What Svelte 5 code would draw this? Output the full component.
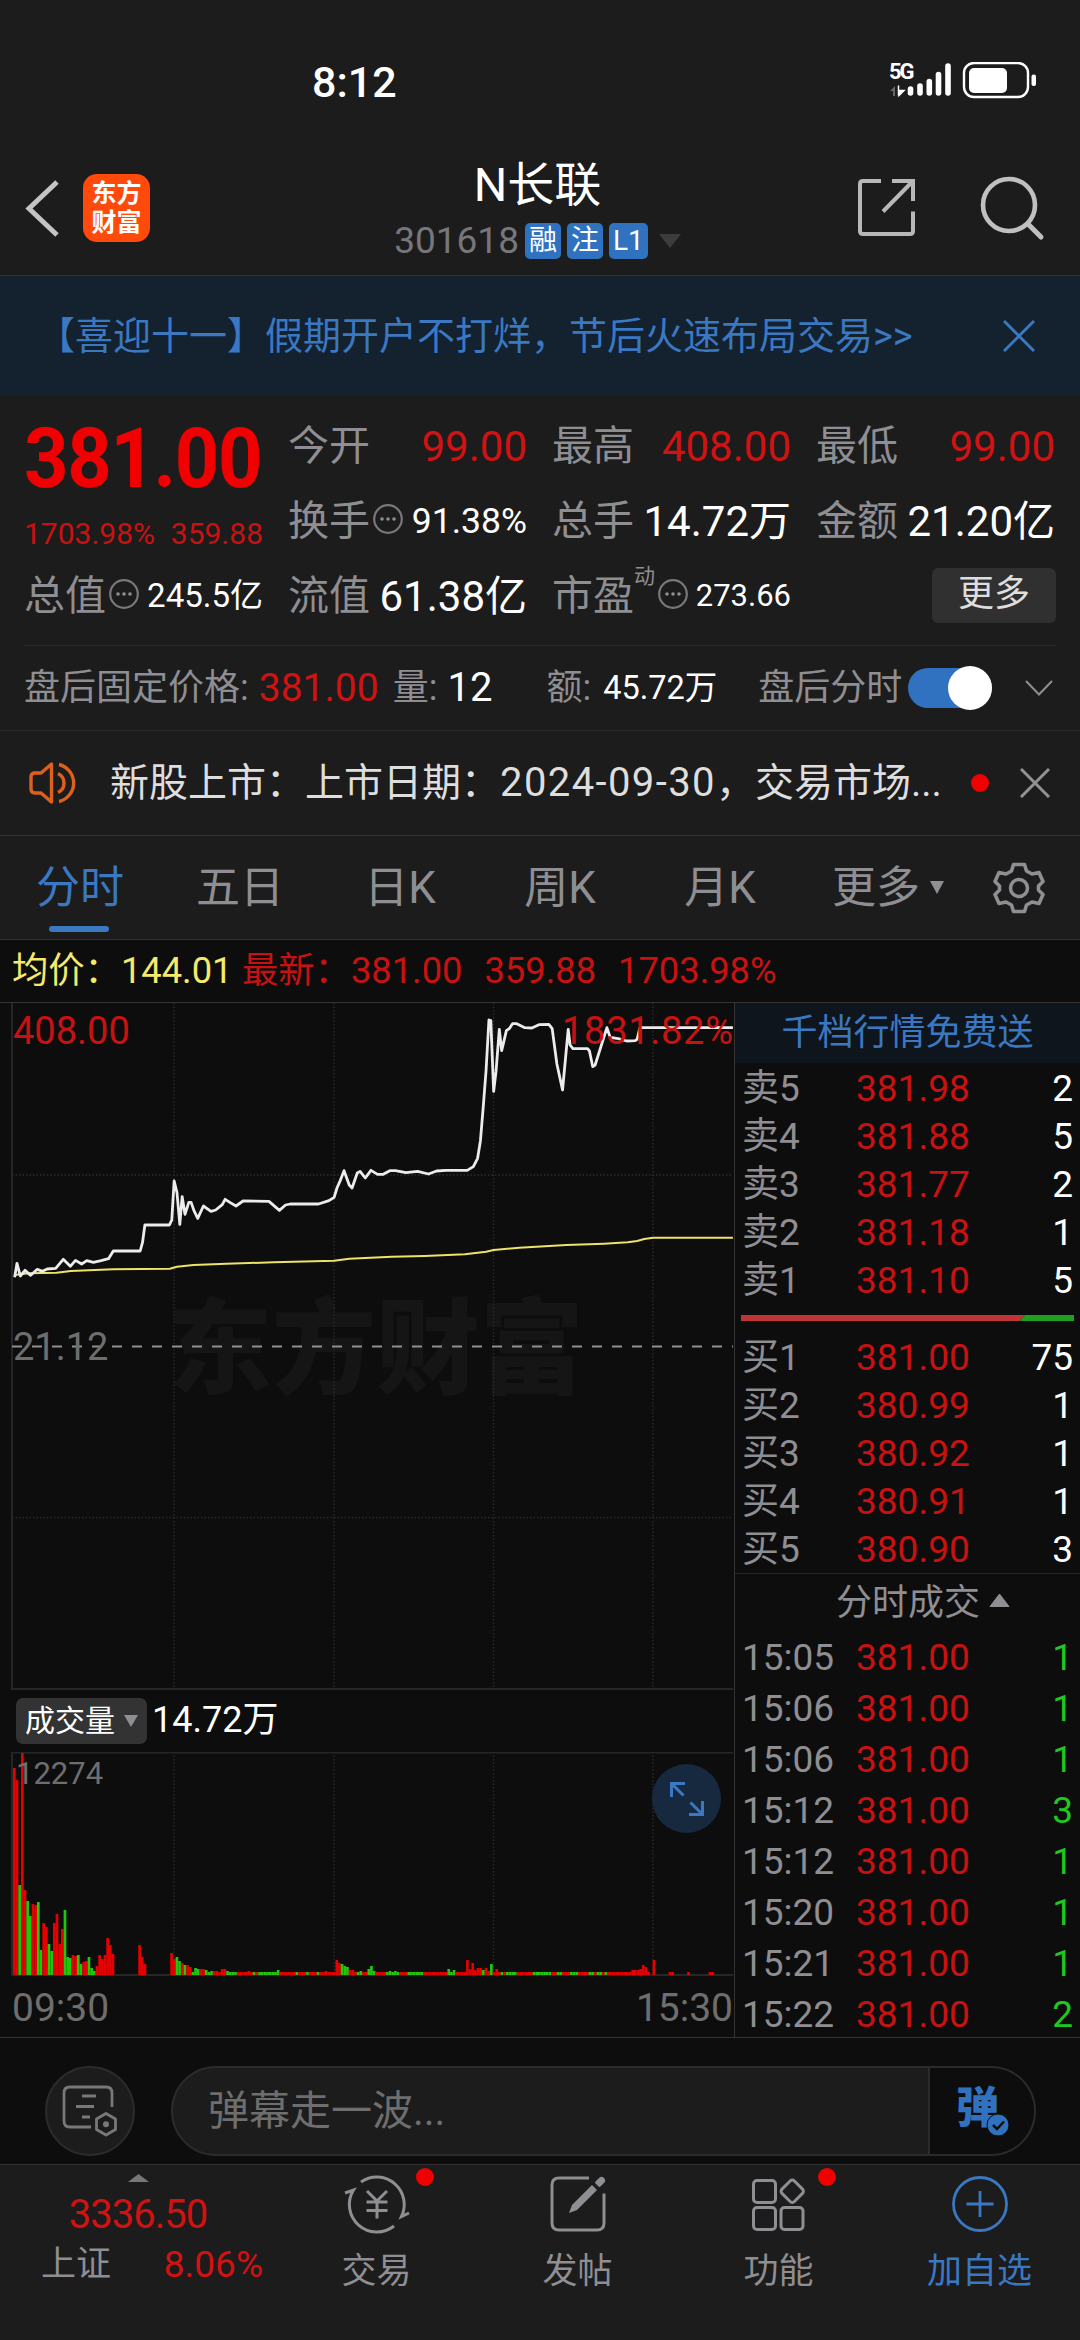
<script lang="ts">
  const badges = ['融', '注', 'L1']

  const tabs = ['五日', '日K', '周K', '月K']

  const asks = [
    { label: '卖5', price: '381.98', volume: 2 },
    { label: '卖4', price: '381.88', volume: 5 },
    { label: '卖3', price: '381.77', volume: 2 },
    { label: '卖2', price: '381.18', volume: 1 },
    { label: '卖1', price: '381.10', volume: 5 },
  ]

  const bids = [
    { label: '买1', price: '381.00', volume: 75 },
    { label: '买2', price: '380.99', volume: 1 },
    { label: '买3', price: '380.92', volume: 1 },
    { label: '买4', price: '380.91', volume: 1 },
    { label: '买5', price: '380.90', volume: 3 },
  ]

  const trades = [
    { time: '15:05', price: '381.00', volume: 1 },
    { time: '15:06', price: '381.00', volume: 1 },
    { time: '15:06', price: '381.00', volume: 1 },
    { time: '15:12', price: '381.00', volume: 3 },
    { time: '15:12', price: '381.00', volume: 1 },
    { time: '15:20', price: '381.00', volume: 1 },
    { time: '15:21', price: '381.00', volume: 1 },
    { time: '15:22', price: '381.00', volume: 2 },
  ]

  const priceLine =
    '31,862 36,820 43,858 53,841 65,856 79,838 90,844 100,837 118,835 134,808 149,829 160,811 173,822 184,812 198,817 214,812 230,806 240,783 297,783 302,757 307,705 359,705 364,690 369,573 375,608 381,703 386,620 392,673 400,637 405,637 411,662 419,685 431,648 447,664 457,660 471,644 477,628 488,638 500,648 515,633 570,634 592,661 605,645 615,642 675,642 697,632 708,622 714,594 720,575 729,542 740,585 746,594 757,549 763,544 774,564 786,541 800,553 812,553 826,542 838,542 860,548 885,544 908,552 925,543 945,541 990,541 1003,530 1012,505 1018,452 1024,350 1030,240 1036,90 1040,92 1046,304 1051,245 1058,118 1063,182 1073,122 1079,116 1086,101 1095,101 1112,113 1127,114 1142,104 1163,103 1170,116 1180,222 1192,300 1204,118 1208,165 1214,176 1245,176 1249,183 1256,230 1261,225 1286,113 1293,142 1310,146 1328,153 1346,152 1350,148 1356,113 1553,113'
  const averageLine =
    '31,855 60,850 120,848 150,843 240,838 360,836 375,830 410,825 480,821 580,817 708,812 740,806 830,800 900,798 985,793 1030,785 1046,780 1100,773 1200,765 1280,761 1330,757 1350,753 1365,747 1384,743 1553,743'

  const gridX = [174, 334, 493.5, 653]

  // colour of each minute followed by how many minutes it lasts
  const runs =
    'r2 g1 r2 g2 r2 g2 r2 g2 r4 g3 r2 g2 r2 g3 r30 g2 r1 g1 r2 g3 r2 g3 r5 g4 r6 g1 r1 g8 r6 g1 r3 g1 r3 g1 r8 g3 r3 g2 r2 g3 r4 g5 r3 g6 r9 g3 r10 g1 r2 g1 r3 g1 r1 g4 r6 g7 r2 g2 r3 g3 r4 g2 r1 g2 r1 g1 r40'
  const colors = runs.split(' ').flatMap((run) => Array(Number(run.slice(1))).fill(run[0]))

  const opening = [
    207, 195, 90, 222, 85, 74, 59, 71, 70, 73, 25, 52, 48, 31, 24, 52, 61, 31, 46, 65, 18, 17, 20, 19, 20, 11, 13, 14,
    18, 7, 4, 9, 20, 16, 20, 37, 30, 21, 0, 0, 0, 0, 0, 0, 0, 0, 0, 30, 18, 11, 0, 0, 0, 0, 0, 0, 0, 0, 0, 22, 16, 18,
    14, 12, 10, 10, 8, 3, 7, 6, 6, 6, 5, 3, 4, 4, 4, 3, 6, 6, 4,
  ]
  const spikes: Record<number, number> = {
    88: 4, 99: 5, 117: 4, 121: 15, 122: 12, 123: 11, 124: 9, 125: 8, 126: 5, 127: 5, 130: 4, 133: 6, 134: 9,
    135: 4, 141: 4, 143: 4, 163: 6, 165: 5, 170: 15, 171: 6, 172: 12, 173: 5, 174: 7, 175: 7, 176: 5, 177: 7,
    178: 4, 179: 11, 181: 6, 232: 5, 233: 5, 234: 5, 235: 6, 236: 10, 237: 8, 238: 3, 240: 15, 246: 3, 247: 3,
    253: 3, 261: 3, 262: 3, 263: 3,
  }

  const bars = colors
    .map((color, i) => ({ color, x: 13 + i * 2.665, height: opening[i] ?? spikes[i] ?? (i < 239 ? 3 : 0) }))
    .filter((bar) => bar.height > 0 && bar.x < 733)
</script>

{#snippet info()}
  <svg class="info" width="30" height="30" viewBox="0 0 30 30">
    <circle cx="15" cy="15" r="13.8" fill="none" stroke="#78787c" stroke-width="2.2" />
    <circle cx="9" cy="15" r="1.8" fill="#8e8e93" />
    <circle cx="15" cy="15" r="1.8" fill="#8e8e93" />
    <circle cx="21" cy="15" r="1.8" fill="#8e8e93" />
  </svg>
{/snippet}

<div class="page">
  <header class="top">
    <div class="status">
      <span class="clock">8:12</span>
      <div class="signals">
        <span class="net">5G</span>
        <svg width="150" height="40" viewBox="0 0 150 40">
          <path d="M6 34V24L1 29H4V34z" fill="#666" />
          <path d="M9.500 23.500V33.500M10 33.500l5-5h-5z" stroke="#fff" stroke-width="1.5" fill="#fff" />
          <path d="M21.5 27v4M31 24v7M40.3 19.5v11.5M49.5 12.5v18.500M59 4v27" stroke="#fff" stroke-width="5.6" stroke-linecap="round" />
          <rect x="75" y="1" width="64" height="34" rx="10" fill="none" stroke="#fff" stroke-width="2.4" />
          <rect x="80" y="6" width="38" height="25" rx="5" fill="#fff" />
          <rect x="142.5" y="12.5" width="4.5" height="11.5" rx="2" fill="#fff" />
        </svg>
      </div>
    </div>
    <div class="navbar">
      <svg class="back" width="40" height="60" viewBox="0 0 40 60">
        <path d="M32 4L4 30.5L32 57" fill="none" stroke="#c4c4c4" stroke-width="5" />
      </svg>
      <div class="logo"><span>东方</span><span>财富</span></div>
      <div class="title">
        <h1>N长联</h1>
        <div class="code">
          <span>301618</span>
          {#each badges as badge}
            <b>{badge}</b>
          {/each}
          <svg class="caret" width="22" height="14" viewBox="0 0 22 14"><path d="M0 0h22L11 14z" fill="#3c3c3c" /></svg>
        </div>
      </div>
      <svg class="share" width="62" height="62" viewBox="0 0 62 62">
        <g fill="none" stroke="#b8b8b8" stroke-width="4">
          <path d="M25 4H7Q4 4 4 7V54Q4 57 7 57H54Q57 57 57 54V34.5" />
          <path d="M36 4H57V24M56 5L27 34.5" />
        </g>
      </svg>
      <svg class="search" width="66" height="66" viewBox="0 0 66 66">
        <g fill="none" stroke="#c0c0c0" stroke-linecap="round">
          <circle cx="30" cy="30" r="26" stroke-width="4.6" />
          <path d="M50 50L62 62" stroke-width="5" />
        </g>
      </svg>
    </div>
  </header>

  <div class="promo">
    <span>【喜迎十一】假期开户不打烊，节后火速布局交易&gt;&gt;</span>
    <svg width="32" height="32" viewBox="0 0 32 32"><path d="M1 1L31 31M31 1L1 31" stroke="#3a78c2" stroke-width="3" /></svg>
  </div>

  <section class="quote">
    <div class="last">
      <strong>381.00</strong>
      <div class="change"><span>1703.98%</span><span>359.88</span></div>
    </div>
    <div class="cell"><label>今开</label><span class="up">99.00</span></div>
    <div class="cell"><label>最高</label><span class="up">408.00</span></div>
    <div class="cell"><label>最低</label><span class="up">99.00</span></div>
    <div class="cell"><label>换手{@render info()}</label><span class="mid">91.38%</span></div>
    <div class="cell"><label>总手</label><span>14.72万</span></div>
    <div class="cell"><label>金额</label><span>21.20亿</span></div>
    <div class="cell"><label>总值{@render info()}</label><span class="small">245.5亿</span></div>
    <div class="cell"><label>流值</label><span>61.38亿</span></div>
    <div class="cell"><label>市盈<sup>动</sup>{@render info()}</label><span class="tiny">273.66</span></div>
    <div class="cell"><button class="more">更多</button></div>
  </section>

  <div class="after">
    <label>盘后固定价格:</label>
    <span class="up fixed">381.00</span>
    <label>量:</label>
    <span class="lots">12</span>
    <label>额:</label>
    <span class="amount">45.72万</span>
    <label>盘后分时</label>
    <i class="toggle"></i>
    <svg width="28" height="16" viewBox="0 0 28 16"><path d="M1 1L14 14.5L27 1" fill="none" stroke="#8e8e93" stroke-width="2" /></svg>
  </div>

  <div class="news">
    <svg width="52" height="44" viewBox="0 0 52 44">
      <g fill="none" stroke="#dd601c" stroke-width="3.4">
        <path d="M22.5 3V41L12 32H6Q2 32 2 28V16Q2 12 6 12H12Z" stroke-linejoin="round" />
        <path d="M29 12.5A10.5 10.5 0 0 1 29 31.5M30 3.5A19 19 0 0 1 30 40.5" />
      </g>
    </svg>
    <p>新股上市：上市日期：<span>2024-09-30</span>，交易市场...</p>
    <i></i>
    <svg width="30" height="30" viewBox="0 0 30 30"><path d="M1 1L29 29M29 1L1 29" stroke="#929296" stroke-width="3" /></svg>
  </div>

  <nav class="tabs">
    <span class="tab active">分时</span>
    {#each tabs as tab}
      <span class="tab">{tab}</span>
    {/each}
    <span class="expand">更多<svg width="14" height="13" viewBox="0 0 14 13"><path d="M0 0h14L7 13z" fill="#8e8e93" /></svg></span>
    <svg class="gear" width="52" height="52" viewBox="0 0 52 52">
      <g fill="none" stroke="#8e8e93" stroke-width="3.6" stroke-linejoin="round">
        <path d="M20.5 2.5H31.5L33.5 9L39 12L46 10.5L50 19.5L45.500 24V28L50 32.5L46 41.5L39 40L33.5 43L31.5 49.5H20.5L18.5 43L13 40L6 41.5L2 32.5L6.5 28V24L2 19.5L6 10.5L13 12L18.5 9Z" />
        <circle cx="26" cy="26" r="8.5" />
      </g>
    </svg>
  </nav>

  <div class="legend">
    <span class="avg">均价：<b>144.01</b></span>
    <span class="now">最新：<b>381.00</b><b>359.88</b><b>1703.98%</b></span>
  </div>

  <main class="board">
    <div class="charts">
      <svg class="minute" width="734" height="687" viewBox="0 0 734 687">
        <text x="168" y="383" class="watermark">东方财富</text>
        <g stroke="#2b2b2b" stroke-width="1.4" stroke-dasharray="1.5 2">
          {#each gridX as x}
            <path d="M{x} 0V686" />
          {/each}
          <path d="M12 172H733M12 514.5H733" />
        </g>
        <path d="M12 0V686H733" fill="none" stroke="#262626" stroke-width="2" />
        <path d="M12 343.5H733" stroke="#909090" stroke-width="2" stroke-dasharray="10 10" />
        <g transform="translate(0 -13) scale(.47194 .33333)" fill="none" stroke-linejoin="round">
          <polyline points={averageLine} stroke="#ece36a" stroke-width="2" vector-effect="non-scaling-stroke" />
          <polyline points={priceLine} stroke="#ececec" stroke-width="2.8" vector-effect="non-scaling-stroke" />
        </g>
        <text x="13" y="41" class="high">408.00</text>
        <text x="733" y="41" class="high" text-anchor="end" textLength="171">1831.82%</text>
        <text x="13" y="357" class="close">21.12</text>
      </svg>

      <div class="indicator">
        <button>成交量<svg width="14" height="12" viewBox="0 0 14 12"><path d="M0 0h14L7 12z" fill="#8e8e93" /></svg></button>
        <span>14.72万</span>
      </div>

      <div class="volume">
        <svg width="734" height="226" viewBox="0 0 734 226">
          <g stroke="#2b2b2b" stroke-width="1.4" stroke-dasharray="1.5 2">
            {#each gridX as x}
              <path d="M{x} 0V222" />
            {/each}
          </g>
          <path d="M733 .5H12V223H733" fill="none" stroke="#262626" stroke-width="2" />
          {#each bars as bar}
            <rect
              x={bar.x}
              y={223 - bar.height}
              width="2.7"
              height={bar.height}
              fill={bar.color === 'r' ? '#e60000' : '#1fc80a'}
            />
          {/each}
          <text x="16" y="32" class="peak">12274</text>
        </svg>
        <button class="zoom" aria-label="全屏">
          <svg width="36" height="36" viewBox="0 0 36 36">
            <path d="M16 2.5H2.5V16M3 3L14.5 14.5M20 33.5H33.5V20M33 33L21.5 21.5" fill="none" stroke="#3a78c2" stroke-width="3" />
          </svg>
        </button>
      </div>

      <div class="times"><span>09:30</span><span>15:30</span></div>
    </div>

    <aside class="book">
      <div class="levels-ad">千档行情免费送</div>
      <div class="levels">
        {#each asks as row}
          <div class="row"><em>{row.label}</em><span>{row.price}</span><b>{row.volume}</b></div>
        {/each}
      </div>
      <svg class="ratio" width="333" height="6" viewBox="0 0 333 6">
        <path d="M0 0H284L279 6H0z" fill="#bf3434" />
        <path d="M284 0H333V6H279z" fill="#1f9f1f" />
      </svg>
      <div class="levels bids">
        {#each bids as row}
          <div class="row"><em>{row.label}</em><span>{row.price}</span><b>{row.volume}</b></div>
        {/each}
      </div>
      <div class="trades-title">
        分时成交<svg width="21" height="15" viewBox="0 0 21 15"><path d="M10.5 1L20 13.5H1z" fill="#8e8e93" stroke="#8e8e93" stroke-linejoin="round" /></svg>
      </div>
      <div class="trades">
        {#each trades as row}
          <div class="row"><em>{row.time}</em><span>{row.price}</span><b>{row.volume}</b></div>
        {/each}
      </div>
    </aside>
  </main>

  <div class="danmu">
    <div class="round">
      <svg width="56" height="52" viewBox="0 0 56 52">
        <g fill="none" stroke="#78787a" stroke-width="2.8">
          <path d="M29 42H8Q2 42 2 36V8Q2 2 8 2H44Q50 2 50 8V22" />
          <path d="M20 11H34M14 21.5H32M20 32H28" />
          <path d="M44 28.5L53.5 34V44.500L44 50L34.5 44.500V34Z" stroke-linejoin="round" />
        </g>
        <circle cx="44" cy="39.3" r="3" fill="#78787a" />
      </svg>
    </div>
    <div class="input">
      <span>弹幕走一波...</span>
      <div class="send">
        弹
        <svg width="24" height="24" viewBox="0 0 24 24">
          <circle cx="12" cy="12" r="11" fill="#3072c0" stroke="#0d0d0d" />
          <path d="M7 12l4 4l7-7.500" fill="none" stroke="#0d0d0d" stroke-width="2.5" />
        </svg>
      </div>
    </div>
  </div>

  <footer class="bottom">
    <div class="index">
      <svg width="21" height="8" viewBox="0 0 21 8"><path d="M10.5 0L21 8H0z" fill="#77777a" /></svg>
      <strong>3336.50</strong>
      <div><span>上证</span><b>8.06%</b></div>
    </div>
    <div class="item">
      <svg width="66" height="60" viewBox="0 0 66 60">
        <g fill="none" stroke="#8e8e93" stroke-width="3">
          <path d="M17 8A27.5 27.5 0 0 1 57.5 42.5L65 39" />
          <path d="M50 52A27.5 27.5 0 0 1 9.5 16L1 19" />
          <path d="M23 17L33 27L43 17M33 27V44.5M22.5 28H43.5M22.5 36.5H43.5" />
        </g>
      </svg>
      <span>交易</span>
      <i></i>
    </div>
    <div class="item">
      <svg width="66" height="60" viewBox="0 0 66 60">
        <path d="M44 4H14Q7 4 7 11V49Q7 56 14 56H52Q59 56 59 49V19.5" fill="none" stroke="#8e8e93" stroke-width="3" />
        <path d="M24 39L27 31L47 11L52 16L32 36Z" fill="#8e8e93" />
        <path d="M53.500 9.500L56.500 6.500" stroke="#8e8e93" stroke-width="7" stroke-linecap="round" />
        <path d="M48 8L55 15" stroke="#1c1c1c" stroke-width="1.600" />
      </svg>
      <span>发帖</span>
    </div>
    <div class="item">
      <svg width="66" height="60" viewBox="0 0 66 60">
        <g fill="none" stroke="#8e8e93" stroke-width="3">
          <rect x="7.5" y="6.5" width="22" height="22" rx="3.5" />
          <rect x="7.5" y="33.5" width="22" height="22" rx="3.5" />
          <rect x="35" y="33.5" width="22" height="22" rx="3.5" />
          <rect x="37.5" y="8.5" width="17.500" height="17.500" rx="3" transform="rotate(45 46.250 17.250)" />
        </g>
      </svg>
      <span>功能</span>
      <i></i>
    </div>
    <div class="item add">
      <svg width="66" height="60" viewBox="0 0 66 60">
        <g fill="none" stroke="#3a78c2" stroke-width="2.8">
          <circle cx="33" cy="30" r="26.5" />
          <path d="M33 17V43M19.5 30H46.5" />
        </g>
      </svg>
      <span>加自选</span>
    </div>
  </footer>
</div>

<style>
  :global(body) {
    background: #0d0d0d;
  }

  .page {
    display: flex;
    flex-direction: column;
    width: 1080px;
    height: 2340px;
    overflow: hidden;
    background: linear-gradient(#1c1c1c 939px, #0d0d0d 939px);
    color: #fff;
    font-family: Roboto, 'Noto Sans CJK SC', sans-serif;
    line-height: 1;
    white-space: nowrap;
  }

  .page > * {
    flex: none;
  }

  .page :is(div, header, section, nav, main, aside, footer, button, span) {
    box-sizing: border-box;
  }

  svg {
    display: block;
    flex: none;
  }

  button {
    padding: 0;
    border: 0;
    font: inherit;
  }

  em,
  i {
    font-style: normal;
  }

  b {
    font-weight: 400;
  }

  .up {
    color: #d01212;
  }

  .top {
    height: 276px;
    background: #1c1c1c;
    border-bottom: 1px solid #333;
  }

  .status {
    display: flex;
    justify-content: space-between;
    height: 142px;
    padding: 60px 41px 0 312px;
  }

  .clock {
    font-size: 43px;
    font-weight: 500;
    line-height: 44px;
  }

  .signals {
    position: relative;
    margin-top: 2px;
  }

  .net {
    position: absolute;
    top: -2px;
    left: 0;
    font-size: 22px;
    font-weight: 700;
    letter-spacing: -2px;
    line-height: 24px;
  }

  .navbar {
    display: flex;
    align-items: center;
    height: 132px;
    padding: 0 35px 0 25px;
  }

  .logo {
    display: flex;
    flex-direction: column;
    align-items: center;
    justify-content: center;
    width: 67px;
    height: 68px;
    margin-left: 18px;
    border-radius: 14px;
    background: #ff4a0c;
    font-size: 25px;
    font-weight: 700;
    line-height: 29px;
  }

  .title {
    display: flex;
    flex: 1;
    flex-direction: column;
    align-items: center;
    margin-left: 69px;
  }

  .title h1 {
    margin: 0 0 11px;
    font-size: 47px;
    font-weight: 400;
    line-height: 54px;
  }

  .code {
    display: flex;
    align-items: center;
    height: 36px;
    color: #77777b;
    font-size: 37px;
  }

  .code b {
    margin-left: 6px;
    padding: 0 4px;
    border-radius: 5px;
    background: #3072c0;
    color: #fff;
    font-size: 28px;
    line-height: 36px;
  }

  .caret {
    margin-left: 11px;
  }

  .share {
    margin-right: 61px;
  }

  .promo {
    display: flex;
    align-items: center;
    justify-content: space-between;
    height: 120px;
    padding: 0 45px 0 37px;
    background: #14212f;
    color: #3a78c2;
    font-size: 38px;
  }

  .quote {
    display: grid;
    grid-template-rows: repeat(3, 75px);
    grid-template-columns: repeat(4, 239px);
    column-gap: 25px;
    height: 249px;
    margin: 0 24px;
    padding-top: 13px;
  }

  .last {
    grid-row: span 2;
    color: #f00000;
  }

  .last strong {
    display: block;
    margin-top: 10px;
    font-size: 84px;
    line-height: 80px;
    letter-spacing: -1.5px;
    transform: scaleX(0.925);
    transform-origin: left;
  }

  .change {
    display: flex;
    justify-content: space-between;
    margin-top: 20px;
    color: #c81212;
    font-size: 30px;
  }

  .cell {
    display: flex;
    align-items: center;
    justify-content: space-between;
    font-size: 42px;
  }

  .cell label {
    display: flex;
    align-items: center;
    color: #8e8e93;
    font-size: 41px;
  }

  .cell sup {
    align-self: flex-start;
    margin-top: -10px;
    font-size: 21px;
  }

  .info {
    margin: 0 0 6px 3px;
  }

  .mid {
    font-size: 35.5px;
  }

  .small {
    margin-bottom: 3px;
    font-size: 33px;
  }

  .tiny {
    margin-bottom: 3px;
    font-size: 31px;
  }

  .more {
    width: 124px;
    height: 55px;
    margin: 0 -1px 2px auto;
    padding-bottom: 3px;
    border-radius: 6px;
    background: #303030;
    color: #dedede;
    font-size: 36px;
  }

  .after {
    display: flex;
    align-items: center;
    height: 85px;
    margin: 0 24px;
    border-top: 1px solid #292929;
    font-size: 40px;
  }

  .after label {
    color: #8e8e93;
    font-size: 36px;
  }

  .fixed {
    width: 134px;
    margin-left: 10px;
    font-size: 39px;
  }

  .lots {
    width: 99px;
    margin-left: 10px;
  }

  .amount {
    width: 155px;
    margin-left: 12px;
    font-size: 32.5px;
  }

  .toggle {
    display: flex;
    width: 84px;
    height: 40px;
    margin: 0 33px 0 6px;
    border-radius: 20px;
    background: #3072c0;
  }

  .toggle::after {
    content: '';
    width: 44px;
    height: 44px;
    margin: -2px 0 0 auto;
    border-radius: 50%;
    background: #fff;
  }

  .news {
    display: flex;
    align-items: center;
    height: 105px;
    padding: 0 30px 0 29px;
    border-top: 1px solid #292929;
    color: #dedede;
    font-size: 39px;
    box-sizing: border-box;
  }

  .news p {
    width: 861px;
    margin: 0 0 0 29px;
  }

  .news span {
    font-size: 40px;
    letter-spacing: 1.4px;
  }

  .news i {
    width: 18px;
    height: 18px;
    margin-right: auto;
    border-radius: 50%;
    background: #f00000;
  }

  .tabs {
    display: flex;
    align-items: center;
    height: 105px;
    padding-right: 35px;
    border-top: 1px solid #333;
    border-bottom: 1px solid #333;
    color: #8e8e93;
    font-size: 44px;
  }

  .tab {
    width: 160px;
    text-align: center;
  }

  .active {
    position: relative;
    color: #3a78c2;
  }

  .active::after {
    content: '';
    position: absolute;
    bottom: -22px;
    left: 49px;
    width: 60px;
    height: 6px;
    border-radius: 3px;
    background: #3a78c2;
  }

  .expand {
    display: flex;
    align-items: center;
    gap: 10px;
    margin-left: 32px;
  }

  .gear {
    margin-left: auto;
  }

  .legend {
    display: flex;
    align-items: center;
    height: 62px;
    padding-left: 12px;
    font-size: 36.3px;
  }

  .legend b {
    margin-right: 22px;
  }

  .avg {
    width: 230px;
    color: #f5ea6a;
  }

  .now {
    color: #c81212;
  }

  .board {
    display: flex;
    height: 1036px;
    border-top: 1px solid #333;
    border-bottom: 1px solid #333;
  }

  .charts {
    width: 735px;
    border-right: 1px solid #333;
  }

  .high,
  .close {
    fill: #c81212;
    font-size: 38px;
  }

  .close {
    fill: #6e6e6e;
  }

  .watermark {
    fill: #151515;
    font-size: 104px;
    font-weight: 900;
  }

  .indicator {
    display: flex;
    align-items: center;
    height: 62px;
    padding-left: 16px;
    font-size: 36px;
  }

  .indicator button {
    display: flex;
    align-items: center;
    gap: 9px;
    width: 131px;
    height: 46px;
    margin-right: 5px;
    padding-left: 9px;
    border-radius: 7px;
    background: #333;
    color: #fff;
    font-size: 30px;
  }

  .indicator span {
    margin-bottom: 2px;
  }

  .volume {
    position: relative;
  }

  .peak {
    fill: #6e6e6e;
    font-size: 31px;
  }

  .zoom {
    position: absolute;
    top: 12px;
    right: 13px;
    display: grid;
    place-items: center;
    width: 69px;
    height: 69px;
    border-radius: 50%;
    background: #17293f;
  }

  .times {
    display: flex;
    justify-content: space-between;
    padding: 11px 1px 0 12px;
    color: #6e6e6e;
    font-size: 39px;
  }

  .book {
    width: 345px;
  }

  .levels-ad {
    height: 60px;
    background: #0f151d;
    color: #3a78c2;
    font-size: 36px;
    line-height: 60px;
    text-align: center;
  }

  .levels {
    height: 252px;
    padding-top: 1px;
  }

  .bids {
    height: 253px;
    padding-top: 12px;
    border-bottom: 1px solid #252525;
  }

  .row {
    display: grid;
    grid-template-columns: 114px 1fr auto;
    align-items: center;
    height: 48.1px;
    padding: 0 7px;
    font-size: 37px;
  }

  .row em {
    color: #8e8e93;
  }

  .row span {
    color: #c81212;
  }

  .ratio {
    margin-left: 6px;
  }

  .trades-title {
    display: flex;
    align-items: center;
    justify-content: center;
    gap: 9px;
    height: 58px;
    padding-left: 31px;
    color: #8e8e93;
    font-size: 36px;
  }

  .trades-title svg {
    margin-bottom: 5px;
  }

  .trades .row {
    height: 51px;
  }

  .trades .row b {
    color: #1ec81e;
  }

  .danmu {
    display: flex;
    align-items: center;
    height: 126px;
    padding: 20px 44px 0 45px;
  }

  .round {
    display: grid;
    place-items: center;
    width: 90px;
    height: 90px;
    margin-right: 36px;
    border: 2px solid #2b2b2b;
    border-radius: 50%;
    background: #1c1c1c;
  }

  .input {
    display: flex;
    flex: 1;
    align-items: center;
    justify-content: space-between;
    height: 90px;
    padding-left: 35px;
    overflow: hidden;
    border: 2px solid #2b2b2b;
    border-radius: 45px;
    background: #1c1c1c;
    color: #6e6e6e;
    font-size: 41px;
  }

  .send {
    position: relative;
    width: 106px;
    height: 90px;
    padding-left: 26px;
    border-left: 2px solid #2b2b2b;
    background: #0d0d0d;
    color: #3072c0;
    font-size: 43px;
    font-weight: 900;
    line-height: 84px;
  }

  .send svg {
    position: absolute;
    top: 47px;
    left: 56px;
  }

  .bottom {
    display: flex;
    height: 176px;
    border-top: 1px solid #333;
    background: #1c1c1c;
    color: #8e8e93;
  }

  .index {
    display: flex;
    flex-direction: column;
    align-items: center;
    width: 276px;
    padding: 9px 0 0;
    color: #d01212;
  }

  .index strong {
    margin-top: 13px;
    font-size: 40px;
    font-weight: 400;
    letter-spacing: -1px;
  }

  .index div {
    display: flex;
    align-items: center;
    justify-content: space-between;
    width: 222px;
    margin-top: 11px;
    margin-left: 28px;
    font-size: 37px;
  }

  .index div span {
    color: #8e8e93;
    font-size: 35px;
  }

  .item {
    position: relative;
    display: flex;
    flex: 1;
    flex-direction: column;
    align-items: center;
    padding-top: 9px;
    font-size: 35px;
  }

  .item span {
    margin-top: 20px;
  }

  .item i {
    position: absolute;
    top: 3px;
    left: 140px;
    width: 18px;
    height: 18px;
    border-radius: 50%;
    background: #f00000;
  }

  .add {
    color: #3a78c2;
  }
</style>
